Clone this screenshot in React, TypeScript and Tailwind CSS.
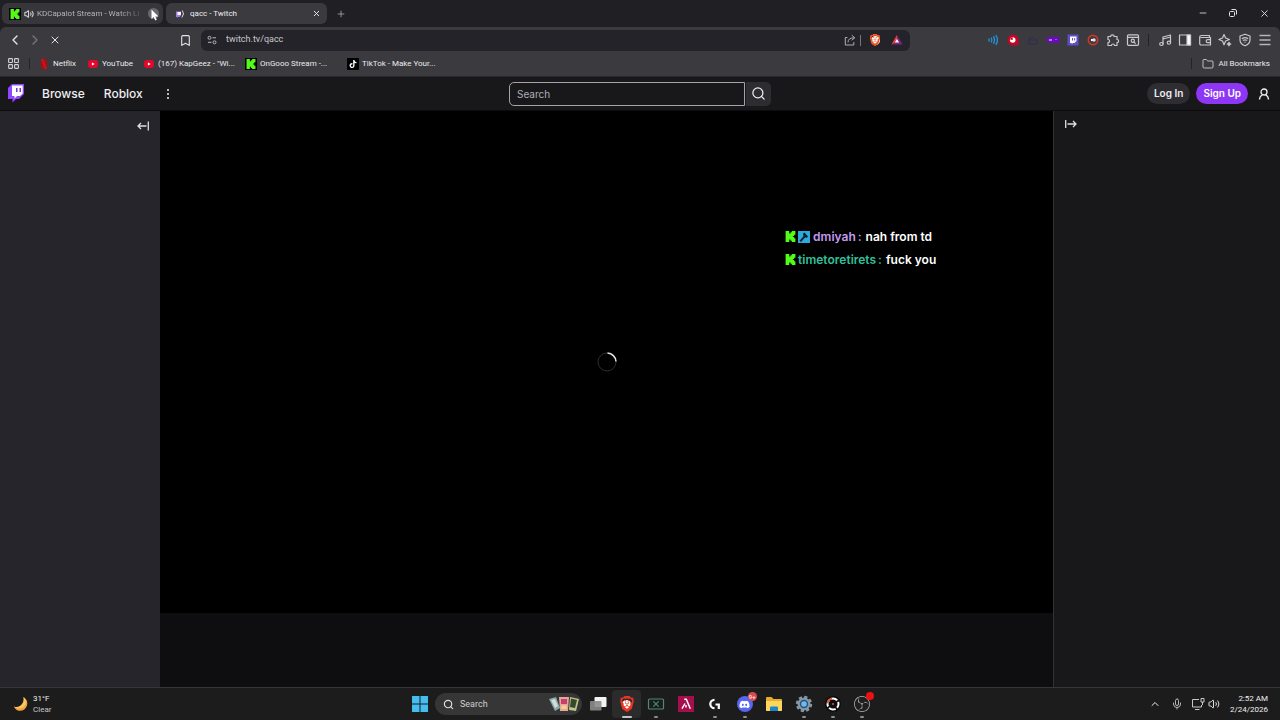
import type { ReactNode } from "react";
import {
  Bookmark,
  ChevronLeft,
  ChevronRight,
  ChevronUp,
  Folder,
  LayoutGrid,
  Mic,
  Minus,
  Plus,
  Search,
  Volume2,
  X,
} from "lucide-react";
import { SiBrave, SiObsstudio, SiTiktok } from "react-icons/si";
import { FaDiscord } from "react-icons/fa";

const UI_FONT = "font-['Roboto','Noto_Sans',sans-serif]";
const INTER = "font-['Inter','Liberation_Sans',sans-serif]";

function KickMark({ className }: { className: string }) {
  return (
    <svg viewBox="0 0 24 24" className={className} fill="#53fc18">
      <path d="M1.3 0h8v5.3H12V2.7h2.7V0h8v8H20v2.7h-2.7v2.6H20V16h2.7v8h-8v-2.7H12v-2.6H9.3V24h-8Z" />
    </svg>
  );
}

function KickIcon() {
  return (
    <span className="flex size-3 shrink-0 items-center justify-center bg-black">
      <KickMark className="size-[10px]" />
    </span>
  );
}

function YouTubeIcon() {
  return (
    <svg viewBox="0 0 12 12" className="size-3 shrink-0">
      <rect x="1" y="2" width="10" height="8" rx="2.4" fill="#e0082d" />
      <path d="M4.9 4.4v3.2L7.8 6z" fill="#fff" />
    </svg>
  );
}

function NetflixIcon() {
  return (
    <svg viewBox="0 0 12 12" className="size-3 shrink-0">
      <path d="M3 1h2.500v10H3zM6.500 1H9v10H6.500z" fill="#a80c15" />
      <path d="M3 1h2.500L9 11H6.500z" fill="#d40f1a" />
    </svg>
  );
}

function TikTokIcon() {
  return (
    <span className="flex size-3 shrink-0 items-center justify-center bg-black">
      <SiTiktok className="size-2 text-white" />
    </span>
  );
}

function TwitchLogo({ className }: { className: string }) {
  return (
    <svg viewBox="0 0 16 19" className={className}>
      <path d="M0 4 4 0h12v10l-5 5H8l-3.500 3.500V15H0z" fill="#9147ff" />
      <path d="M4 1.500h10.700v8L12 12H9l-2.500 2.500V12H4z" fill="#fff" />
      <path d="M8 4h1.500v4H8zM11.500 4H13v4h-1.500z" fill="#6f39d6" />
    </svg>
  );
}

function BraveLion({ className }: { className: string }) {
  return (
    <span className="relative flex items-center justify-center">
      <span className="absolute size-[9px] rounded-full bg-white" />
      <SiBrave className={`relative ${className}`} />
    </span>
  );
}

function Line({ children }: { children: ReactNode }) {
  return (
    <svg
      viewBox="0 0 14 14"
      className="size-[14px]"
      fill="none"
      stroke="#c9c9cd"
      strokeWidth="1.2"
      strokeLinecap="round"
      strokeLinejoin="round"
    >
      {children}
    </svg>
  );
}

const EXTENSIONS: { label: string; icon: ReactNode }[] = [
  {
    label: "Volume booster",
    icon: (
      <svg viewBox="0 0 14 14" className="size-[14px]" fill="none" stroke="#2295dc" strokeWidth="1.3" strokeLinecap="round">
        <path d="M3 6v2M5.300 5q1.200 2 0 4M7.600 3.700q2 3.300 0 6.600M10 2.500q2.900 4.500 0 9" />
      </svg>
    ),
  },
  {
    label: "Recorder",
    icon: (
      <svg viewBox="0 0 14 14" className="size-[14px]">
        <path d="M7 1.500A5.500 5.500 0 1 0 7 12.500h5.500V7A5.500 5.500 0 0 0 7 1.500z" fill="#c40626" />
        <circle cx="6.700" cy="7" r="2.800" fill="#fff" />
        <path d="M6.700 7V4.200A2.800 2.800 0 0 0 4 6.500z" fill="#c40626" />
      </svg>
    ),
  },
  {
    label: "Shopping",
    icon: (
      <svg viewBox="0 0 14 14" className="size-[14px]" fill="none" stroke="#342b52" strokeWidth="1.2">
        <path d="M4 7V4.500h4M3 7h8v4H3z" />
      </svg>
    ),
  },
  {
    label: "Game pad",
    icon: (
      <svg viewBox="0 0 14 14" className="size-[14px]">
        <path d="M1 4h7l5-.500V9l-2 1.500-3-1H2L1 9z" fill="#6d08c4" />
        <path d="M3 7h3" stroke="#e0b0ff" strokeWidth="1.300" />
        <path d="M9 6.500h2" stroke="#a04be0" strokeWidth="1.200" />
      </svg>
    ),
  },
  {
    label: "Twitch tools",
    icon: (
      <svg viewBox="0 0 14 14" className="size-[14px]">
        <rect x="1.500" y="1.500" width="11" height="11" fill="#5f4cc9" />
        <path d="M4 3.500h6.500v4.500L8.500 10H7l-1.300 1.300V10H4z" fill="#fff" />
        <path d="M6 5h1v2.500H6zM8.200 5h1v2.500h-1z" fill="#5f4cc9" />
      </svg>
    ),
  },
  {
    label: "Live alerts",
    icon: (
      <svg viewBox="0 0 14 14" className="size-[14px]">
        <circle cx="7" cy="7" r="4.700" fill="none" stroke="#c5362f" strokeWidth="1.700" />
        <path d="M5 7h3" stroke="#fff" strokeWidth="2" />
        <circle cx="8" cy="7" r="1.700" fill="#e8e0e0" />
      </svg>
    ),
  },
  {
    label: "Extensions",
    icon: (
      <Line>
        <path d="M2 3.500h2.700a1.700 1.700 0 1 1 3.400 0H11v3a1.600 1.600 0 1 1 0 3.200v2.800H8.500a1.500 1.500 0 0 0-3 0H2V9.700a1.600 1.600 0 0 0 0-3.200z" />
      </Line>
    ),
  },
  {
    label: "Page search",
    icon: (
      <Line>
        <rect x="1.500" y="1.800" width="11" height="10.500" rx="1" />
        <path d="M1.500 4.300h11" />
        <circle cx="6.800" cy="7.800" r="1.600" />
        <path d="m8 9 1.300 1.300" />
      </Line>
    ),
  },
];

const BROWSER_TOOLS: { label: string; icon: ReactNode }[] = [
  {
    label: "Playlist",
    icon: (
      <Line>
        <path d="M5 11V4l7.500-2v7.500M5 6l7.500-2" />
        <ellipse cx="3.400" cy="11" rx="1.700" ry="1.500" />
        <ellipse cx="10.900" cy="9.700" rx="1.700" ry="1.500" />
      </Line>
    ),
  },
  {
    label: "Sidebar",
    icon: (
      <Line>
        <rect x="1.500" y="2" width="11" height="10" />
        <path d="M9 2h3.500v10H9z" fill="#fff" />
      </Line>
    ),
  },
  {
    label: "Wallet",
    icon: (
      <Line>
        <path d="M11.500 4.500V2.500h-8a1.800 1.800 0 0 0-1.800 1.800v6A1.500 1.500 0 0 0 3.200 12h9.300V4.500H3" />
        <path d="M12.500 6.700H9.700a1.500 1.500 0 0 0 0 3h2.800" />
      </Line>
    ),
  },
  {
    label: "Leo AI",
    icon: (
      <Line>
        <path d="M6 1.500 7.600 5l3.800 1.500L7.600 8 6 11.800 4.500 8 .9 6.500 4.500 5z" />
        <path d="M11 9.500v3M9.500 11h3" strokeWidth="1.700" />
      </Line>
    ),
  },
  {
    label: "VPN",
    icon: (
      <Line>
        <path d="M7 1.200 12 3v4q0 3.800-5 5.800Q2 10.800 2 7V3z" />
        <path d="M4.300 5.500q2.700-1.800 5.400 0M5.300 7.300q1.700-1 3.400 0M7 9v.2" />
      </Line>
    ),
  },
  {
    label: "Menu",
    icon: (
      <svg viewBox="0 0 14 14" className="size-[14px]" stroke="#b5b5b9" strokeWidth="1.300">
        <path d="M1.500 2.500h11M1.500 7h11M1.500 11.500h11" />
      </svg>
    ),
  },
];

const BOOKMARKS: { title: string; width: string; icon: ReactNode }[] = [
  { title: "Netflix", width: "w-[49px]", icon: <NetflixIcon /> },
  { title: "YouTube", width: "w-14", icon: <YouTubeIcon /> },
  { title: '(167) KapGeez - "Wi...', width: "w-[102px]", icon: <YouTubeIcon /> },
  { title: "OnGooo Stream -...", width: "w-[102px]", icon: <KickIcon /> },
  { title: "TikTok - Make Your...", width: "w-[102px]", icon: <TikTokIcon /> },
];

const TASKBAR_APPS: { label: string; running?: boolean; active?: boolean; icon: ReactNode }[] = [
  {
    label: "Task view",
    icon: (
      <svg viewBox="0 0 18 18" className="size-[18px]">
        <rect x="5.500" y="2" width="12" height="10" rx="1" fill="#f3f3f3" />
        <rect x="1" y="6" width="11.500" height="9.500" rx="1" fill="#8b8b8b" fillOpacity="0.9" />
      </svg>
    ),
  },
  {
    label: "Brave",
    running: true,
    active: true,
    icon: <BraveLion className="size-4 text-[#ee3420]" />,
  },
  {
    label: "Xbox capture",
    running: true,
    icon: (
      <svg viewBox="0 0 18 18" className="size-[18px]" fill="none" stroke="#4c8a75" strokeWidth="1.200">
        <rect x="1.500" y="4" width="15" height="10" rx="1" />
        <path d="m6.300 6.300 5.400 5.400M11.700 6.300l-5.400 5.400" />
      </svg>
    ),
  },
  {
    label: "Aimlabs",
    icon: (
      <svg viewBox="0 0 18 18" className="size-[18px]">
        <rect x="1" y="1" width="16" height="16" fill="#a50f4d" />
        <path d="M7.300 4.300h2l4 9.400M8 8.500 5 13.700M9 10v2.500" fill="none" stroke="#fff" strokeWidth="1.500" />
      </svg>
    ),
  },
  {
    label: "Logitech G HUB",
    running: true,
    icon: (
      <svg viewBox="0 0 18 18" className="size-[18px]" fill="none" stroke="#fff" strokeWidth="2.200">
        <path d="M8.500 4.800a4.200 4.200 0 0 0 0 8.400M9.500 9.500h3.300v4.500" />
      </svg>
    ),
  },
  {
    label: "Discord",
    running: true,
    icon: (
      <span className="relative flex size-4 items-center justify-center rounded-full bg-[#5865f2]">
        <FaDiscord className="size-[11px] text-white" />
        <span className="absolute -top-1 -right-1 flex size-[9px] items-center justify-center rounded-full bg-[#d84a4e] text-[6px] leading-none text-white">
          9+
        </span>
      </span>
    ),
  },
  {
    label: "File Explorer",
    icon: (
      <svg viewBox="0 0 18 18" className="size-[18px]">
        <path d="M1 3q0-1 1-1h4.500l2 2H16q1 0 1 1v10q0 1-1 1H2q-1 0-1-1z" fill="#e9ab2b" />
        <path d="M1 6h16v9q0 1-1 1H2q-1 0-1-1z" fill="#fbd55c" />
        <path d="M5 16v-3.500q0-1 1-1h6q1 0 1 1V16z" fill="#1d86c9" />
      </svg>
    ),
  },
  {
    label: "Settings",
    running: true,
    icon: (
      <svg viewBox="0 0 18 18" className="size-[18px]">
        <circle cx="9" cy="9" r="6.500" fill="#8698a6" />
        <circle cx="9" cy="9" r="7" fill="none" stroke="#8698a6" strokeWidth="2.400" strokeDasharray="3.200 2.298" />
        <circle cx="9" cy="9" r="4.200" fill="#26527c" />
        <circle cx="9" cy="9" r="2.800" fill="#6db8ee" />
      </svg>
    ),
  },
  {
    label: "Crosshair",
    running: true,
    icon: (
      <svg viewBox="0 0 18 18" className="size-[18px]" fill="none">
        <circle cx="9" cy="9" r="8" fill="#0c0c0c" />
        <circle cx="9" cy="9" r="5.500" stroke="#fff" strokeWidth="2" strokeDasharray="7 1.639" strokeDashoffset="3" />
        <path d="M3.600 8.300a5.500 5.500 0 0 1 4.400-4.700" stroke="#d35a3a" strokeWidth="2" />
        <circle cx="9" cy="9" r="1" fill="#d35a3a" />
      </svg>
    ),
  },
  {
    label: "OBS Studio",
    running: true,
    icon: (
      <span className="relative flex size-4 items-center justify-center rounded-full bg-[#1f1f1f]">
        <SiObsstudio className="size-4 text-[#b4b4b4]" />
        <span className="absolute -top-1 -right-1 size-2 rounded-full bg-[#ee1111]" />
      </span>
    ),
  },
];

function IconButton({ label, children }: { label: string; children: ReactNode }) {
  return (
    <button type="button" aria-label={label} className="flex size-5 shrink-0 items-center justify-center text-[#e6e6e8]">
      {children}
    </button>
  );
}

function TabStrip() {
  return (
    <div className="flex h-[27px] items-center gap-[3px] bg-[#1f1f24] pl-[2px] text-[8px]">
      <div className="relative flex h-[21px] w-[161px] items-center gap-[3px] rounded-md bg-[#37363a] pr-1 pl-[7px] text-[#b4b4b8]">
        <KickIcon />
        <Volume2 className="size-[10px] shrink-0 text-[#d8d8da]" strokeWidth={2.5} />
        <span className="whitespace-nowrap [mask-image:linear-gradient(to_right,black_80%,#0004)]">
          KDCapalot Stream - Watch Li
        </span>
        <button type="button" aria-label="Close tab" className="ml-auto size-[11px] shrink-0 rounded-full bg-[#69696d]" />
        <svg viewBox="0 0 8 12" className="absolute top-[6px] right-1 h-3 w-2">
          <path d="M.500.500v9.500l2.200-2L4.300 11.500l1.500-.7L4.300 7.500h3.200z" fill="#fff" />
        </svg>
      </div>
      <div className="flex h-[21px] w-[161px] items-center gap-1 rounded-md bg-[#3b3a3f] pr-[6px] pl-2 text-[#ededee]">
        <svg viewBox="0 0 12 12" className="size-3 shrink-0">
          <path d="M2 3.500h5v4L5.500 9H4v1L3 9H2z" fill="#a57ae8" />
          <path d="M3.500 4H7v3H3.500z" fill="#fff" />
          <path d="M8.300 2.500q2.700 3.500-.5 7" fill="none" stroke="#ddd5ee" />
        </svg>
        <span className="flex-1 truncate">qacc - Twitch</span>
        <button type="button" aria-label="Close tab">
          <X className="size-[9px]" strokeWidth={2.5} />
        </button>
      </div>
      <button type="button" aria-label="New tab" className="ml-[6px] text-[#a5a5a9]">
        <Plus className="size-[10px]" />
      </button>
      <div className="ml-auto flex text-[#e2e2e4]">
        <button type="button" aria-label="Minimize" className="flex w-[30px] justify-center">
          <Minus className="size-[10px]" />
        </button>
        <button type="button" aria-label="Restore" className="flex w-[30px] justify-center">
          <svg viewBox="0 0 10 10" className="size-[10px]" fill="none" stroke="currentColor">
            <rect x="1.500" y="3.500" width="5" height="5" rx="1" />
            <path d="M3.500 1.500h3.500q1.500 0 1.500 1.500v3.500" />
          </svg>
        </button>
        <button type="button" aria-label="Close" className="flex w-8 justify-center">
          <X className="size-[11px]" />
        </button>
      </div>
    </div>
  );
}

function Toolbar() {
  return (
    <div className="flex h-[26px] items-center px-[5px]">
      <IconButton label="Back">
        <ChevronLeft className="size-4" />
      </IconButton>
      <IconButton label="Forward">
        <ChevronRight className="size-4 text-[#77777b]" />
      </IconButton>
      <IconButton label="Stop">
        <X className="size-3" />
      </IconButton>
      <div className="ml-[110px] flex pr-[6px]">
        <IconButton label="Bookmark this page">
          <Bookmark className="size-[13px]" />
        </IconButton>
      </div>
      <div className="mr-[73px] flex h-[21px] flex-1 items-center rounded-md bg-[#242329] pr-[2px] pl-[5px]">
        <svg viewBox="0 0 12 12" className="size-3 shrink-0" fill="none" stroke="#b9b9bd">
          <circle cx="3.500" cy="3.800" r="1.500" />
          <path d="M6.500 3.800h3.500M2 8.300h3.500" />
          <circle cx="8.500" cy="8.300" r="1.500" />
        </svg>
        <input
          aria-label="Address"
          defaultValue="twitch.tv/qacc"
          className="min-w-0 flex-1 bg-transparent pl-2 text-[9px] text-[#c9c9cd] outline-none"
        />
        <button type="button" aria-label="Share">
          <svg
            viewBox="0 0 14 14"
            className="size-[14px]"
            fill="none"
            stroke="#aeaeb2"
            strokeLinecap="round"
            strokeLinejoin="round"
          >
            <path d="M4 4.500H2.300v7.500h8.500V9.500" />
            <path d="M5 9q0-4.200 6-4.200M9 2.500l2.800 2.300L9 7" />
          </svg>
        </button>
        <span className="mx-[3px] h-[11px] w-px bg-[#77777b]" />
        <button type="button" aria-label="Brave Shields" className="flex w-[22px] justify-center">
          <BraveLion className="size-3 text-[#f0562a]" />
        </button>
        <button type="button" aria-label="Brave Rewards" className="flex w-[22px] justify-center">
          <svg viewBox="0 0 12 12" className="size-3">
            <path d="M6 1 .500 10.500h11z" fill="#7b2485" />
            <path d="M6 1 .500 10.500 6 7z" fill="#f0451f" />
            <path d="M6 5 3.900 8.600h4.200z" fill="#fff" />
          </svg>
        </button>
      </div>
      {EXTENSIONS.map((ext) => (
        <IconButton key={ext.label} label={ext.label}>
          {ext.icon}
        </IconButton>
      ))}
      <span className="mr-[6px] ml-[5px] h-3 w-px bg-[#222227]" />
      {BROWSER_TOOLS.map((tool) => (
        <IconButton key={tool.label} label={tool.label}>
          {tool.icon}
        </IconButton>
      ))}
    </div>
  );
}

function BookmarksBar() {
  return (
    <div className="flex h-6 items-center border-b border-[#29292d] pr-[10px] pb-[2px] pl-[7px] text-[8px] text-[#ebebed]">
      <button type="button" aria-label="Apps">
        <LayoutGrid className="size-[13px] text-[#d2d2d5]" />
      </button>
      <span className="mr-2 ml-[9px] h-[11px] w-px bg-[#242428]" />
      {BOOKMARKS.map((b) => (
        <a key={b.title} href="#" className={`flex items-center gap-[3px] whitespace-nowrap ${b.width}`}>
          {b.icon}
          {b.title}
        </a>
      ))}
      <span className="mr-[10px] ml-auto h-[11px] w-px bg-[#242428]" />
      <button type="button" className="flex items-center gap-1">
        <Folder className="size-3" strokeWidth={1.5} />
        All Bookmarks
      </button>
    </div>
  );
}

function TwitchNav() {
  return (
    <nav className={`grid h-[34px] grid-cols-[1fr_auto_1fr] items-center border-b border-[#0c0c0e] bg-[#18181b] text-[#efeff1] ${INTER}`}>
      <div className="flex items-center pl-2 text-[12px] font-medium">
        <a href="#" aria-label="Twitch">
          <TwitchLogo className="h-[19px] w-4" />
        </a>
        <a href="#" className="ml-[18px]">
          Browse
        </a>
        <a href="#" className="ml-[19px]">
          Roblox
        </a>
        <button type="button" aria-label="More" className="ml-[19px]">
          <svg viewBox="0 0 12 12" className="size-3" fill="#efeff1">
            <circle cx="6" cy="2" r="1" />
            <circle cx="6" cy="6" r="1" />
            <circle cx="6" cy="10" r="1" />
          </svg>
        </button>
      </div>
      <form className="flex items-center gap-px" onSubmit={(e) => e.preventDefault()}>
        <input
          type="text"
          aria-label="Search"
          placeholder="Search"
          className="h-6 w-[236px] rounded-l-[5px] border border-[#a3a3a8] bg-transparent px-[7px] text-[10px] outline-none placeholder:text-[#adadb8]"
        />
        <button type="submit" aria-label="Search Button" className="flex h-6 w-[25px] items-center justify-center rounded-r-[5px] bg-[#2c2c31]">
          <Search className="size-[15px]" />
        </button>
      </form>
      <div className="flex items-center justify-end pr-[9px] text-[10px] font-semibold">
        <button type="button" className="h-[21px] rounded-full bg-[#2d2d32] px-[7px]">
          Log In
        </button>
        <button type="button" className="ml-[6px] h-[21px] rounded-full bg-[#8e36f5] px-[7px] text-white">
          Sign Up
        </button>
        <button type="button" aria-label="User menu" className="ml-[9px]">
          <svg viewBox="0 0 14 14" className="size-[14px]" fill="none" stroke="#efeff1" strokeWidth="1.300">
            <circle cx="7" cy="5" r="3" />
            <path d="M2.500 12.500q0-3 3-4.700M11.500 12.500q0-3-3-4.700" />
          </svg>
        </button>
      </div>
    </nav>
  );
}

function ChatOverlay() {
  return (
    <div className={`absolute top-[114px] left-[70%] flex flex-col text-[12px] leading-[23px] font-semibold text-white ${INTER}`}>
      <p className="flex items-center gap-[2px]">
        <KickMark className="size-[11px]" />
        <svg viewBox="0 0 12 12" className="size-3">
          <rect width="12" height="12" fill="#2fa9dd" />
          <path d="m5 2.500 1.500-1L10 5.500 8.500 7 7.300 6.300 3 11 1.500 9.700l4-4.500z" fill="#06222e" />
        </svg>
        <span className="ml-px text-[#c49bf0]">dmiyah</span>
        <span className="text-[#c49bf0]">:</span>
        <span className="ml-[2px]">nah from td</span>
      </p>
      <p className="flex items-center gap-[2px]">
        <KickMark className="size-[11px]" />
        <span className="text-[#2fc19a]">timetoretirets</span>
        <span className="text-[#2fc19a]">:</span>
        <span className="ml-[2px]">fuck you</span>
      </p>
    </div>
  );
}

function StreamPage() {
  return (
    <main className="flex flex-1 bg-[#0e0e10] text-[#dedee3]">
      <aside className="flex w-40 shrink-0 items-start justify-end bg-[#26252b] pt-2 pr-[10px]">
        <button type="button" aria-label="Collapse side nav">
          <svg viewBox="0 0 14 14" className="size-[14px]" fill="none" stroke="currentColor" strokeWidth="1.300">
            <path d="M12.300 2.500v9M10.500 7H2M5 4 2 7l3 3" />
          </svg>
        </button>
      </aside>
      <section className="min-w-0 flex-1">
        <div className="relative flex aspect-video items-center justify-center bg-black">
          <svg viewBox="0 0 20 20" className="size-5" fill="none">
            <circle cx="10" cy="10" r="9" stroke="#2e2e2e" />
            <path d="M10.500 1a9 9 0 0 1 8.500 8.500" stroke="#e4e4e4" strokeWidth="1.500" />
          </svg>
          <ChatOverlay />
        </div>
      </section>
      <aside className="flex w-[227px] shrink-0 items-start border-l border-[#323236] bg-[#18181b] px-[10px] pt-[6px]">
        <button type="button" aria-label="Collapse chat">
          <svg viewBox="0 0 14 14" className="size-[14px]" fill="none" stroke="currentColor" strokeWidth="1.300">
            <path d="M1.700 3v8M3.500 7H12M9 4l3 3-3 3" />
          </svg>
        </button>
      </aside>
    </main>
  );
}

function Taskbar() {
  return (
    <footer className="grid h-[33px] grid-cols-[1fr_auto_1fr] items-center border-t border-[#363636] bg-[#1c1c1c] text-[8px] leading-[11px] text-[#f0f0f0]">
      <button type="button" className="flex items-center gap-1 pl-[13px] text-left">
        <svg viewBox="0 0 16 16" className="size-4">
          <path d="M10.500 1q5 3.500 3.500 8.500-2 5.500-7.500 5.300Q2.500 14.500 1 10.500q3.500 1.500 6.800-1Q11.500 6.500 10.500 1z" fill="#f2a63a" />
          <path d="M10.500 1q3.500 3.500 2.300 7-2.500 5-7.800 4.200Q2.500 12 1 10.500q3.500 1.500 6.800-1Q11.500 6.500 10.500 1z" fill="#f9c765" />
        </svg>
        <span>
          <span className="block">31°F</span>
          <span className="block text-[#c4c4c4]">Clear</span>
        </span>
      </button>
      <div className="flex items-center gap-px pl-[2px]">
        <button type="button" aria-label="Start" className="flex w-[29px] justify-center">
          <svg viewBox="0 0 16 16" className="size-4" fill="#45bdf0">
            <path d="M0 0h7.500v7.500H0zM8.500 0H16v7.500H8.500zM0 8.500h7.500V16H0zM8.500 8.500H16V16H8.500z" />
          </svg>
        </button>
        <label className="flex h-[22px] w-[147px] items-center gap-[6px] rounded-full bg-[#363636] pr-[2px] pl-2">
          <Search className="size-[11px] shrink-0 text-[#dedede]" strokeWidth={2.5} />
          <input
            type="text"
            aria-label="Search Windows"
            placeholder="Search"
            className="min-w-0 flex-1 bg-transparent text-[9px] outline-none placeholder:text-[#cfcfcf]"
          />
          <svg viewBox="0 0 32 18" className="h-[18px] w-8 shrink-0">
            <path d="m1 4 7-2 4 11-5 3z" fill="#87a9a9" />
            <path d="m3 5 4-1 3 7-3 2z" fill="#d4dcda" />
            <path d="m22 2 9 2-3 12-7-1z" fill="#bcc487" />
            <path d="m23 3.500 6 1.500-2 8-5-1z" fill="#33482d" />
            <path d="M11 2h10l-1 14h-8z" fill="#e8a59a" />
            <path d="M13 4h6v5h-6z" fill="#c63f6d" />
            <path d="M13.500 10.500h5V14h-5z" fill="#efd58a" />
          </svg>
        </label>
        <div className="flex w-[294px] justify-between">
          {TASKBAR_APPS.map((app) => (
            <button
              key={app.label}
              type="button"
              aria-label={app.label}
              className={`relative flex h-7 w-[29px] items-center justify-center rounded ${app.active ? "bg-[#2b2b2b]" : ""}`}
            >
              {app.icon}
              {app.running && (
                <span
                  className={`absolute bottom-0 h-[2px] rounded-full ${
                    app.active ? "w-[10px] bg-[#c4c4c4]" : "w-1 bg-[#8d8d8d]"
                  }`}
                />
              )}
            </button>
          ))}
        </div>
      </div>
      <div className="flex items-center justify-end pr-3">
        <button type="button" aria-label="Show hidden icons">
          <ChevronUp className="size-3" />
        </button>
        <Mic className="ml-[10px] size-3 text-[#b5b5b5]" />
        <svg viewBox="0 0 14 14" className="ml-2 size-[14px]" fill="none" stroke="#c9c9c9" strokeWidth="1">
          <path d="M8 2.500H1.500v7.500h9V8M4 12.500h4.500" />
          <path d="M10 1.500h3v3.500h-3zM11.500 5v3" />
        </svg>
        <Volume2 className="ml-[3px] size-3 text-[#dedede]" />
        <time className="ml-[10px] text-right">
          <span className="block">2:52 AM</span>
          <span className="block">2/24/2026</span>
        </time>
      </div>
    </footer>
  );
}

export default function App() {
  return (
    <div className={`flex min-h-screen flex-col bg-[#1f1f24] ${UI_FONT}`}>
      <TabStrip />
      <header className="rounded-t-md bg-[#3b3a3f]">
        <Toolbar />
        <BookmarksBar />
      </header>
      <TwitchNav />
      <StreamPage />
      <Taskbar />
    </div>
  );
}
